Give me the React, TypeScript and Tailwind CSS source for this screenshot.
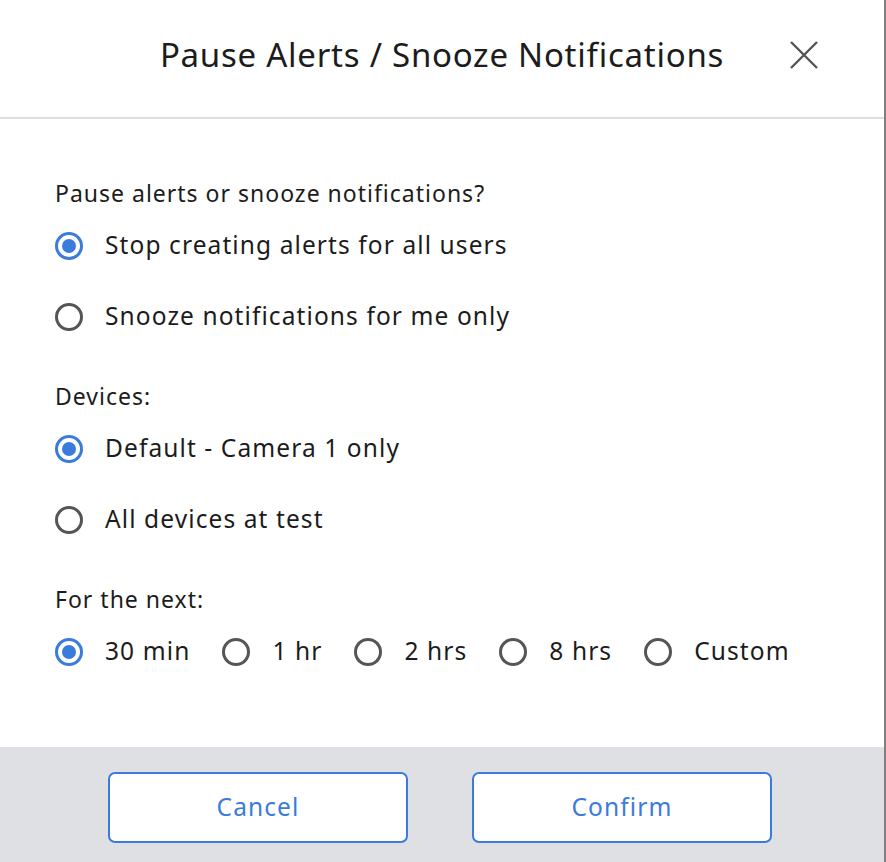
type Opt = { label: string; checked?: boolean };

function Radio({ checked }: { checked?: boolean }) {
  return (
    <span
      className={
        checked
          ? 'flex h-[28px] w-[28px] shrink-0 items-center justify-center rounded-full border-[3px] border-[#3a7bdc]'
          : 'flex h-[28px] w-[28px] shrink-0 items-center justify-center rounded-full border-[3px] border-[#555555]'
      }
    >
      {checked && <span className="h-[14px] w-[14px] rounded-full bg-[#3a7bdc]" />}
    </span>
  );
}

function RadioRow({ label, checked }: Opt) {
  return (
    <label className="flex h-[71px] items-center gap-[22px]">
      <Radio checked={checked} />
      <span className="text-[24.5px] tracking-[1.1px] text-[#1c1c1c]">{label}</span>
    </label>
  );
}

function Section({ title, children, first }: { title: string; children: React.ReactNode; first?: boolean }) {
  return (
    <div className={first ? '' : 'mt-[27px]'}>
      <div className="flex h-[34px] items-center text-[23px] tracking-[1px] text-[#1c1c1c]">{title}</div>
      {children}
    </div>
  );
}

const durations: Opt[] = [
  { label: '30 min', checked: true },
  { label: '1 hr' },
  { label: '2 hrs' },
  { label: '8 hrs' },
  { label: 'Custom' },
];

export default function App() {
  return (
    <div
      className="flex h-[862px] w-[886px] flex-col border-r-2 border-[#808080] bg-white"
      style={{ fontFamily: '"Noto Sans", sans-serif' }}
    >
      <header className="grid h-[117px] grid-cols-[1fr_auto_1fr] items-center pb-[7px]">
        <div />
        <h1 className="text-[33px] font-normal tracking-[0.75px] text-[#1c1c1c]">
          Pause Alerts / Snooze Notifications
        </h1>
        <div className="flex justify-end pr-[66px]">
          <button aria-label="Close" className="text-[#555555]">
            <svg width="28" height="28" viewBox="0 0 28 28" fill="none" stroke="currentColor" strokeWidth="2.4">
              <path d="M1 1L27 27M27 1L1 27" />
            </svg>
          </button>
        </div>
      </header>
      <div className="h-[2px] bg-[#dedede]" />

      <main className="flex-1 pl-[55px] pt-[57px]">
        <Section title="Pause alerts or snooze notifications?" first>
          <RadioRow label="Stop creating alerts for all users" checked />
          <RadioRow label="Snooze notifications for me only" />
        </Section>
        <Section title="Devices:">
          <RadioRow label="Default - Camera 1 only" checked />
          <RadioRow label="All devices at test" />
        </Section>
        <Section title="For the next:">
          <div className="flex gap-[32px]">
            {durations.map((d) => (
              <RadioRow key={d.label} label={d.label} checked={d.checked} />
            ))}
          </div>
        </Section>
      </main>

      <footer className="flex h-[115px] items-center justify-center gap-[64px] bg-[#dfe0e3] pr-[4px] pt-[6px]">
        <button className="h-[71px] w-[300px] rounded-[7px] border-2 border-[#3a7bdc] bg-white text-[24.5px] tracking-[1.1px] text-[#3a7bdc]">
          Cancel
        </button>
        <button className="h-[71px] w-[300px] rounded-[7px] border-2 border-[#3a7bdc] bg-white text-[24.5px] tracking-[1.1px] text-[#3a7bdc]">
          Confirm
        </button>
      </footer>
    </div>
  );
}
